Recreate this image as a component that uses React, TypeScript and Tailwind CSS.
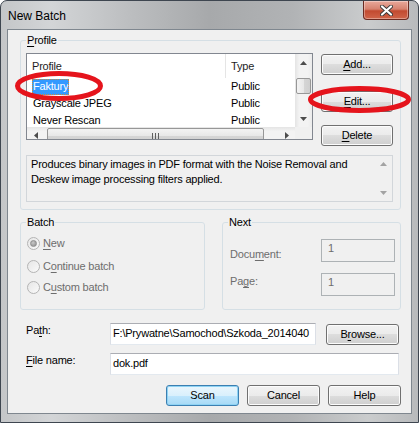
import type { ReactNode } from "react";

const FONT = "font-['Liberation_Sans',Arial,sans-serif]";

function U({ children }: { children: ReactNode }) {
  return <span className="underline decoration-1 underline-offset-[2px]">{children}</span>;
}

function Btn({ children, primary, className = "" }: { children: ReactNode; primary?: boolean; className?: string }) {
  return (
    <div
      className={`h-[21px] shrink-0 rounded-[3px] border flex items-center justify-center text-black ${
        primary
          ? "border-[#3c7fb1] bg-[linear-gradient(#eaf6fd,#d9f0fc_50%,#bee6fd_50%,#a7d9f5)] shadow-[inset_0_0_0_1px_#8ed3f4]"
          : "border-[#707070] bg-[linear-gradient(#f2f2f2,#ebebeb_50%,#dddddd_50%,#cfcfcf)] shadow-[inset_0_0_0_1px_#fcfcfc]"
      } ${className}`}
    >
      {children}
    </div>
  );
}

function Arrow({ dir, color = "#4d4d4d" }: { dir: "up" | "down" | "left" | "right"; color?: string }) {
  const pts = {
    up: "0,4 3.5,0 7,4",
    down: "0,0 3.5,4 7,0",
    left: "4,0 0,3.5 4,7",
    right: "0,0 4,3.5 0,7",
  }[dir];
  const vertical = dir === "up" || dir === "down";
  return (
    <svg width={vertical ? 7 : 4} height={vertical ? 4 : 7} viewBox={vertical ? "0 0 7 4" : "0 0 4 7"}>
      <polygon points={pts} fill={color} />
    </svg>
  );
}

function Radio({ checked, children }: { checked?: boolean; children: ReactNode }) {
  return (
    <div className="flex items-center h-[15px]">
      <div className="ml-[6px] w-[13px] h-[13px] rounded-full border border-[#b4b4b4] bg-[linear-gradient(135deg,#e6e6e6,#fafafa)] flex items-center justify-center">
        {checked && (
          <div className="w-[7px] h-[7px] rounded-full border border-[#8f8f8f] bg-[radial-gradient(circle_at_40%_35%,#c8c8c8,#8a8a8a)]" />
        )}
      </div>
      <span className="ml-[3px] text-[#6d6d6d]">{children}</span>
    </div>
  );
}

const rows = [
  { name: "Faktury", type: "Public", selected: true },
  { name: "Grayscale JPEG", type: "Public" },
  { name: "Never Rescan", type: "Public" },
];

function ProfileList() {
  return (
    <div className="w-[287px] h-[87px] shrink-0 border border-[#828790] bg-white flex flex-col">
      <div className="flex h-[73px]">
        <div className="flex-1 overflow-hidden">
          <div className="flex h-[24px] items-center text-[#1e1e1e]">
            <div className="w-[199px] h-full flex items-center pl-[5px] border-r border-[#e5e5e5]">Profile</div>
            <div className="pl-[5px]">Type</div>
          </div>
          {rows.map((r) => (
            <div key={r.name} className="flex h-[17px] items-center text-black">
              <div className="w-[200px] pl-[5px]">
                {r.selected ? (
                  <span className="inline-block h-[16px] leading-[15px] px-[1px] bg-[#3399ff] text-white outline outline-1 outline-dotted outline-[#cc8a3a] -outline-offset-1">
                    {r.name}
                  </span>
                ) : (
                  <span className="px-[1px]">{r.name}</span>
                )}
              </div>
              <div className="pl-[4px]">{r.type}</div>
            </div>
          ))}
        </div>
        <div className="w-[17px] flex flex-col bg-[linear-gradient(90deg,#e4e4e4,#f3f3f3_25%,#f3f3f3_75%,#ebebeb)]">
          <div className="h-[17px] flex items-center justify-center">
            <Arrow dir="up" />
          </div>
          <div className="flex-1">
            <div className="mt-[7px] mx-[1px] h-[16px] rounded-[2px] border border-[#979797] bg-[linear-gradient(90deg,#f3f3f3,#e8e8e8_50%,#d6d6d6_50%,#cfcfcf)]" />
          </div>
          <div className="h-[17px] flex items-center justify-center">
            <Arrow dir="down" />
          </div>
        </div>
      </div>
      <div className="flex h-[12px] overflow-hidden">
        <div className="flex-1 h-[17px] flex bg-[linear-gradient(#e4e4e4,#f3f3f3_25%,#f3f3f3_75%,#ebebeb)]">
          <div className="w-[17px] flex items-center justify-center">
            <Arrow dir="left" />
          </div>
          <div className="flex-1 pl-[3px] pr-[14px] pt-[1px]">
            <div className="h-[15px] rounded-[2px] border border-[#979797] bg-[linear-gradient(#f3f3f3,#e8e8e8_50%,#d6d6d6_50%,#cfcfcf)] flex justify-center gap-[2px] pt-[4px]">
              <div className="w-px h-[6px] bg-[#5f5f5f]" />
              <div className="w-px h-[6px] bg-[#5f5f5f]" />
              <div className="w-px h-[6px] bg-[#5f5f5f]" />
            </div>
          </div>
          <div className="w-[17px] flex items-center justify-center">
            <Arrow dir="right" />
          </div>
        </div>
        <div className="w-[17px] bg-[#f0f0f0]" />
      </div>
    </div>
  );
}

export default function App() {
  return (
    <div className={`${FONT} relative w-[419px] h-[423px] overflow-hidden rounded-t-[7px] border border-[#3e4650] bg-[linear-gradient(90deg,#c4c6c8,#d3d5d7_12%,#bdbfc1_30%,#a7a9ab_50%,#b1b3b5_70%,#cacccd_88%,#b8babc)]`}>
      {/* title bar */}
      <div className="flex items-start h-[28px]">
        <div className="pl-[7px] pt-[7px] text-[12px] text-black leading-[16px]">New Batch</div>
        <div className="ml-auto mr-[9px] w-[46px] h-[19px] rounded-b-[4px] border border-t-0 border-[#6b2b22] bg-[linear-gradient(#e9a99b,#d6826f_45%,#c24a30_55%,#d0654a)] shadow-[inset_0_0_0_1px_rgba(255,255,255,0.35)] flex items-center justify-center">
          <svg width="13" height="11" viewBox="0 0 13 11">
            <path d="M2 1.5 L11 9.5 M11 1.5 L2 9.5" stroke="#3a3a3a" strokeWidth="4" strokeLinecap="round" />
            <path d="M2 1.5 L11 9.5 M11 1.5 L2 9.5" stroke="#ffffff" strokeWidth="2.2" strokeLinecap="round" />
          </svg>
        </div>
      </div>

      {/* client area */}
      <div className="mx-[6px] h-[385px] border border-[#7f878f] bg-[#f0f0f0] pl-[12px] pr-[10px] pt-[3px] text-[11px] tracking-[-0.2px] text-black">
        <fieldset className="border border-[#d5dfe5] rounded-[3px] px-[5px] pt-[5px] pb-[7px]">
          <legend className="px-[1px] leading-[15px]">
            <U>P</U>rofile
          </legend>
          <div className="flex h-[87px]">
            <ProfileList />
            <div className="ml-[8px] flex flex-col w-[72px]">
              <Btn className="mt-[1px]">
                <U>A</U>dd...
              </Btn>
              <Btn className="mt-[16px]">
                <U>E</U>dit...
              </Btn>
              <Btn className="mt-[13px]">
                <U>D</U>elete
              </Btn>
            </div>
          </div>
          <div className="mt-[15px] w-[367px] h-[47px] border border-[#d2d6da] bg-[#f0f0f0] flex">
            <div className="flex-1 pl-[4px] pt-[1px] leading-[15px]">
              Produces binary images in PDF format with the Noise Removal and Deskew image processing filters applied.
            </div>
            <div className="w-[17px] flex flex-col justify-between py-[6px] items-center">
              <Arrow dir="up" color="#a3a3a3" />
              <Arrow dir="down" color="#a3a3a3" />
            </div>
          </div>
        </fieldset>

        <div className="mt-[5px] flex gap-[17px]">
          <fieldset className="w-[185px] h-[95px] border border-[#d5dfe5] rounded-[3px] px-[0px] pt-[6px]">
            <legend className="ml-[5px] px-[1px] leading-[15px]">Batch</legend>
            <Radio checked>
              <U>N</U>ew
            </Radio>
            <div className="mt-[8px]">
              <Radio>
                C<U>o</U>ntinue batch
              </Radio>
            </div>
            <div className="mt-[6px]">
              <Radio>
                C<U>u</U>stom batch
              </Radio>
            </div>
          </fieldset>
          <fieldset className="flex-1 h-[95px] border border-[#d5dfe5] rounded-[3px] pl-[7px] pr-[5px] pt-[9px]">
            <legend className="ml-[-2px] px-[1px] leading-[15px]">Next</legend>
            <div className="flex justify-between items-start">
              <span className="mt-[8px] leading-[15px] text-[#6d6d6d]">
                Docu<U>m</U>ent:
              </span>
              <div className="w-[74px] h-[23px] border border-[#adb2b5] bg-[#f0f0f0] pl-[6px] pt-[1px] leading-[15px] text-[#6d6d6d]">1</div>
            </div>
            <div className="mt-[11px] flex justify-between items-start">
              <span className="mt-[1px] leading-[15px] text-[#6d6d6d]">
                Pa<U>g</U>e:
              </span>
              <div className="w-[74px] h-[23px] border border-[#adb2b5] bg-[#f0f0f0] pl-[6px] pt-[1px] leading-[15px] text-[#6d6d6d]">1</div>
            </div>
          </fieldset>
        </div>

        <div className="mt-[13px] flex items-start">
          <span className="ml-[6px] w-[84px] leading-[15px]">
            Pa<U>t</U>h:
          </span>
          <div className="w-[206px] h-[22px] border border-[#abadb3] border-b-[#e3e9ef] border-x-[#dbdfe6] bg-white pl-[2px] pt-[2px] leading-[15px] whitespace-nowrap overflow-hidden">
            F:\Prywatne\Samochod\Szkoda_2014040
          </div>
          <Btn className="ml-[10px] mt-[1px] w-[73px]">
            B<U>r</U>owse...
          </Btn>
        </div>

        <div className="mt-[8px] flex items-start">
          <span className="ml-[6px] w-[84px] leading-[15px]">
            <U>F</U>ile name:
          </span>
          <div className="w-[289px] h-[22px] border border-[#abadb3] border-b-[#e3e9ef] border-x-[#dbdfe6] bg-white pl-[2px] pt-[2px] leading-[15px]">
            dok.pdf
          </div>
        </div>

        <div className="mt-[10px] flex justify-end gap-[8px]">
          <Btn primary className="w-[73px]">
            Scan
          </Btn>
          <Btn className="w-[73px]">Cancel</Btn>
          <Btn className="w-[73px]">Help</Btn>
        </div>
      </div>

      {/* red annotation ellipses */}
      <svg className="absolute -left-px -top-px w-[419px] h-[423px] pointer-events-none" viewBox="0 0 419 423">
        <ellipse cx="59" cy="86" rx="41.5" ry="12.5" fill="none" stroke="#e5141c" strokeWidth="5" />
        <ellipse cx="359.5" cy="99.5" rx="49" ry="11" fill="none" stroke="#e5141c" strokeWidth="5" />
      </svg>
    </div>
  );
}
